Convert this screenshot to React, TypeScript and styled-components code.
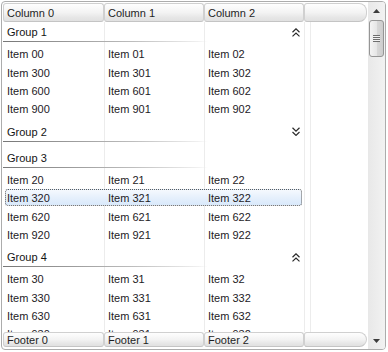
import React from 'react';
import styled, { createGlobalStyle, css } from 'styled-components';

const GlobalStyle = createGlobalStyle`
  html, body {
    margin: 0;
    padding: 0;
    background: #fff;
  }
  body {
    font-family: "Liberation Sans", Arial, sans-serif;
    font-size: 11px;
    color: #1c1c1c;
  }
`;

const COLS = '101px 100px 100px';

type Group = {
  name: string;
  expanded: boolean;
  icon?: 'up' | 'down';
  items: string[];
};

const groups: Group[] = [
  { name: 'Group 1', expanded: true, icon: 'up', items: ['0', '30', '60', '90'] },
  { name: 'Group 2', expanded: false, icon: 'down', items: ['1', '31', '61', '91'] },
  { name: 'Group 3', expanded: true, items: ['2', '32', '62', '92'] },
  { name: 'Group 4', expanded: true, icon: 'up', items: ['3', '33', '63', '93'] },
];

const SELECTED = '32';

const Frame = styled.div`
  box-sizing: border-box;
  width: 385px;
  height: 349px;
  margin: 1px 0 0 1px;
  padding-left: 1px;
  border: 1px solid #acacac;
  border-radius: 4px;
  background: #fff;
  display: flex;
  overflow: hidden;
`;

const Main = styled.div`
  width: 364px;
  margin: 1px 1px 2px 0;
  display: flex;
  flex-direction: column;
  min-height: 0;
`;

const Bar = styled.div<{ $footer?: boolean }>`
  display: flex;
  flex-shrink: 0;
  height: ${(p) => (p.$footer ? 15 : 19)}px;
`;

const BarCell = styled.div<{ $w?: number; $filler?: boolean }>`
  box-sizing: border-box;
  flex: ${(p) => (p.$w ? `0 0 ${p.$w}px` : '1')};
  display: flex;
  align-items: center;
  padding-left: 3px;
  border: 1px solid #d0d0d0;
  border-bottom-color: #c4c4c4;
  border-radius: ${(p) => (p.$filler ? '3px 8px 8px 3px' : '3px')};
  background: linear-gradient(#fefefe, #f3f3f3 50%, #e6e6e6 80%, #e1e1e1);
  color: #1e1e1e;
  white-space: nowrap;
`;

const line = (x: number) => `linear-gradient(#ececec, #ececec) ${x}px 0 / 1px 100% no-repeat`;

const Body = styled.div`
  flex: 1;
  min-height: 0;
  overflow: hidden;
  background: ${line(101)}, ${line(201)}, ${line(301)}, ${line(307)}, #fff;
`;

const GroupBox = styled.section`
  padding-bottom: 3px;
`;

const GroupHead = styled.div`
  box-sizing: border-box;
  width: 301px;
  height: 19px;
  padding: 1px 4px 0;
  display: flex;
  align-items: center;
  justify-content: space-between;
  color: #141414;
`;

const GroupRule = styled.div`
  height: 1px;
  margin-bottom: 3px;
  background: linear-gradient(to right, #777, #bdbdbd 130px, rgba(230, 230, 230, 0.6) 195px, transparent 205px);
`;

const Row = styled.div<{ $selected?: boolean }>`
  position: relative;
  width: 301px;
  display: grid;
  grid-template-columns: ${COLS};
  height: 18.4px;
  align-items: center;

  ${(p) =>
    p.$selected &&
    css`
      &::before {
        content: '';
        position: absolute;
        left: 2px;
        right: 2px;
        top: 0;
        bottom: 1px;
        border: 1px dotted #5c5c5c;
        border-radius: 3px;
        background: linear-gradient(#f5f9fe, #e6f0fc 50%, #d9e9fb);
      }
    `}
`;

const Cell = styled.span`
  position: relative;
  padding-left: 4px;
  white-space: nowrap;
  overflow: hidden;
  color: #1d1a26;
`;

const Track = styled.div`
  width: 17px;
  display: flex;
  flex-direction: column;
  background: linear-gradient(to right, #e8e8e8, #f2f2f2);
`;

const ArrowBtn = styled.div`
  height: 17px;
  flex-shrink: 0;
  display: flex;
  align-items: center;
  justify-content: center;
`;

const Thumb = styled.div`
  box-sizing: border-box;
  height: 37px;
  margin: 1px 1px 0;
  border: 1px solid #959595;
  border-radius: 3px;
  background: linear-gradient(to right, #f4f4f4, #e6e6e6 50%, #d8d8d8 52%, #cdcdcd);
  display: flex;
  align-items: center;
  justify-content: center;
`;

const Grip = styled.div`
  width: 7px;
  height: 7px;
  background: repeating-linear-gradient(#6e6e6e 0 1px, #f2f2f2 1px 2px);
`;

const Spacer = styled.div`
  flex: 1;
`;

function Chevrons({ dir }: { dir: 'up' | 'down' }) {
  const pts = dir === 'up' ? ['0.5,4.2 4,0.8 7.5,4.2', '0.5,8.4 4,5 7.5,8.4'] : ['0.5,0.8 4,4.2 7.5,0.8', '0.5,5 4,8.4 7.5,5'];
  return (
    <svg width="8" height="9" viewBox="0 0 8 9">
      <g fill="none" stroke="#2a2a2a" strokeWidth="1.2">
        {pts.map((p) => (
          <polyline key={p} points={p} />
        ))}
      </g>
    </svg>
  );
}

function Arrow({ dir }: { dir: 'up' | 'down' }) {
  return (
    <svg width="7" height="4" viewBox="0 0 7 4">
      <polygon points={dir === 'up' ? '0,4 3.5,0 7,4' : '0,0 7,0 3.5,4'} fill="#3c3c3c" />
    </svg>
  );
}

export default function App() {
  return (
    <>
      <GlobalStyle />
      <Frame>
        <Main>
          <Bar>
            <BarCell $w={101}>Column 0</BarCell>
            <BarCell $w={100}>Column 1</BarCell>
            <BarCell $w={100}>Column 2</BarCell>
            <BarCell $filler />
          </Bar>
          <Body>
            {groups.map((g) => (
              <GroupBox key={g.name}>
                <GroupHead>
                  <span>{g.name}</span>
                  {g.icon && <Chevrons dir={g.icon} />}
                </GroupHead>
                <GroupRule />
                {g.expanded &&
                  g.items.map((it) => (
                    <Row key={it} $selected={it === SELECTED}>
                      {[0, 1, 2].map((c) => (
                        <Cell key={c}>Item {it}{c}</Cell>
                      ))}
                    </Row>
                  ))}
              </GroupBox>
            ))}
          </Body>
          <Bar $footer>
            <BarCell $w={101}>Footer 0</BarCell>
            <BarCell $w={100}>Footer 1</BarCell>
            <BarCell $w={100}>Footer 2</BarCell>
            <BarCell $filler />
          </Bar>
        </Main>
        <Track>
          <ArrowBtn>
            <Arrow dir="up" />
          </ArrowBtn>
          <Thumb>
            <Grip />
          </Thumb>
          <Spacer />
          <ArrowBtn>
            <Arrow dir="down" />
          </ArrowBtn>
        </Track>
      </Frame>
    </>
  );
}
